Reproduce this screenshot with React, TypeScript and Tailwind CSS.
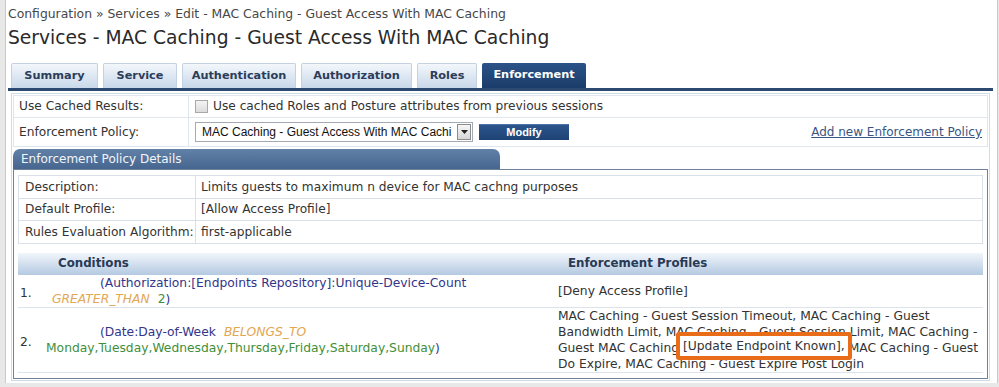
import React from "react";

const tabs = [
  { label: "Summary", w: "w-[87px]", active: false },
  { label: "Service", w: "w-[74px]", active: false },
  { label: "Authentication", w: "w-[114px]", active: false },
  { label: "Authorization", w: "w-[111px]", active: false },
  { label: "Roles", w: "w-[60px]", active: false },
  { label: "Enforcement", w: "w-[104px]", active: true },
];

export default function App() {
  return (
    <div className="w-[999px] h-[387px] overflow-hidden bg-[#e8e8e8] font-['DejaVu_Sans',Verdana,sans-serif] text-[12.2px] text-[#333]">
      <div className="ml-[5px] mr-[1px] h-[383px] bg-white border-l border-r border-[#c9c9c9] pl-[2px] pr-[4px]">
        <div className="pt-[6px] leading-[16px] text-[12.4px] text-[#474747]">
          Configuration » Services » Edit - MAC Caching - Guest Access With MAC Caching
        </div>
        <div className="mt-[5px] text-[18.7px] leading-[22px] text-[#2a2a2a]">
          Services - MAC Caching - Guest Access With MAC Caching
        </div>

        <div className="mt-[14px] ml-[3px] flex gap-[5px]">
          {tabs.map((t) =>
            t.active ? (
              <div
                key={t.label}
                className={`${t.w} h-[25px] flex items-center justify-center rounded-t-[2px] bg-gradient-to-b from-[#2b5389] to-[#1b3c6a] text-[11.3px] font-bold text-white`}
              >
                {t.label}
              </div>
            ) : (
              <div
                key={t.label}
                className={`${t.w} h-[25px] flex items-center justify-center rounded-t-[2px] border border-b-0 border-[#c3d1e1] bg-gradient-to-b from-[#f3f7fb] to-[#c8d8ea] text-[11.3px] font-bold text-[#2b3d59]`}
              >
                {t.label}
              </div>
            )
          )}
        </div>
        <div className="h-[3px] bg-[#2c4a71]" />

        <div className="mt-[2px] mx-[3px] border border-[#d3dbe4] p-[1px]">
          <table className="w-full border-collapse">
            <tbody>
              <tr className="h-[22px]">
                <td className="w-[175px] border border-[#e0e6ed] pl-[5px] text-[#333]">Use Cached Results:</td>
                <td className="border border-[#e0e6ed] pl-[6px]">
                  <div className="flex items-center">
                    <span className="inline-block w-[13px] h-[13px] border border-[#a9a9a9] bg-gradient-to-b from-[#f4f4f4] to-[#dcdcdc]" />
                    <span className="ml-[5px]">Use cached Roles and Posture attributes from previous sessions</span>
                  </div>
                </td>
              </tr>
              <tr className="h-[29px]">
                <td className="border border-[#e0e6ed] pl-[5px]">Enforcement Policy:</td>
                <td className="border border-[#e0e6ed] pl-[6px] pr-[5px]">
                  <div className="flex items-center">
                    <div className="w-[278px] h-[20px] border border-[#a3aab3] bg-white flex items-center">
                      <div className="flex-1 overflow-hidden whitespace-nowrap pl-[6px] font-['Liberation_Sans',Arial,sans-serif] text-[12px] text-[#111]">
                        MAC Caching - Guest Access With MAC Cachi
                      </div>
                      <div className="w-[14px] h-[16px] mr-[1px] border border-[#8c8c8c] bg-gradient-to-b from-[#f7f7f7] to-[#d6d6d6] flex items-center justify-center">
                        <svg width="7" height="4" viewBox="0 0 7 4">
                          <path d="M0 0h7L3.5 4z" fill="#222" />
                        </svg>
                      </div>
                    </div>
                    <div className="ml-[6px] w-[90px] h-[16px] border-t border-[#4d72a6] bg-gradient-to-b from-[#2c558d] to-[#1e4274] flex items-center justify-center font-['Liberation_Sans',Arial,sans-serif] text-[11px] font-bold text-white">
                      Modify
                    </div>
                    <a className="ml-auto text-[12px] text-[#3a5583] underline">Add new Enforcement Policy</a>
                  </div>
                </td>
              </tr>
            </tbody>
          </table>

          <div className="mt-[2px] w-[487px] h-[20px] rounded-t-[7px] bg-gradient-to-b from-[#6281a8] to-[#46668f] pl-[8px] leading-[20px] text-[12px] text-[#f2f5fa]">
            Enforcement Policy Details
          </div>
          <div className="border border-[#6e8299] px-[4px] pt-[5px] pb-[5px]">
            <table className="w-full border-collapse">
              <tbody>
                <tr className="h-[23px]">
                  <td className="w-[177px] border border-[#d9e0e8] pl-[6px]">Description:</td>
                  <td className="border border-[#d9e0e8] pl-[5px]">Limits guests to maximum n device for MAC cachng purposes</td>
                </tr>
                <tr className="h-[22px]">
                  <td className="border border-[#d9e0e8] pl-[6px]">Default Profile:</td>
                  <td className="border border-[#d9e0e8] pl-[5px]">[Allow Access Profile]</td>
                </tr>
                <tr className="h-[23px]">
                  <td className="border border-[#d9e0e8] pl-[6px]">Rules Evaluation Algorithm:</td>
                  <td className="border border-[#d9e0e8] pl-[5px]">first-applicable</td>
                </tr>
              </tbody>
            </table>

            <table className="mt-[9px] w-full border-collapse">
              <thead>
                <tr className="h-[22px] bg-gradient-to-b from-[#f2f6fb] to-[#b4c9e1]">
                  <th colSpan={2} className="pl-[40px] text-left text-[11.8px] font-bold text-[#283a56]">Conditions</th>
                  <th className="pl-[15px] text-left text-[11.8px] font-bold text-[#283a56]">Enforcement Profiles</th>
                </tr>
              </thead>
              <tbody className="leading-[16px] text-[12.3px]">
                <tr className="h-[31px] border-b border-[#dde3ea]">
                  <td className="w-[28px] pl-[2px] pt-[4px] align-middle">1.</td>
                  <td className="w-[507px] align-middle">
                    <div className="pl-[54px] text-[#33358a]">(Authorization:[Endpoints Repository]:Unique-Device-Count</div>
                    <div className="pl-[6px]">
                      <span className="italic text-[#e3a652]">GREATER_THAN</span>
                      <span className="ml-[8px] text-[#3f8f3a]">2</span>
                      <span className="text-[#33358a]">)</span>
                    </div>
                  </td>
                  <td className="pl-[5px] align-middle">[Deny Access Profile]</td>
                </tr>
                <tr className="h-[63px] border-b border-[#dde3ea]">
                  <td className="pl-[2px] pt-[4px] align-middle">2.</td>
                  <td className="align-middle">
                    <div className="pl-[54px]">
                      <span className="text-[#33358a]">(Date:Day-of-Week</span>
                      <span className="ml-[8px] italic text-[#e3a652]">BELONGS_TO</span>
                    </div>
                    <div>
                      <span className="text-[#3f8f3a]">Monday,Tuesday,Wednesday,Thursday,Friday,Saturday,Sunday</span>
                      <span className="text-[#33358a]">)</span>
                    </div>
                  </td>
                  <td className="pl-[5px] align-middle leading-[16px] whitespace-nowrap">
                    <div>MAC Caching - Guest Session Timeout, MAC Caching - Guest</div>
                    <div>Bandwidth Limit, MAC Caching - Guest Session Limit, MAC Caching -</div>
                    <div>
                      Guest MAC Caching{" "}
                      <span className="relative -top-[2px] z-10 -mx-[7px] px-[3px] py-[3px] border-4 border-[#e96c18] rounded-[3px] bg-white">
                        [Update Endpoint Known],
                      </span>{" "}
                      MAC Caching - Guest
                    </div>
                    <div>Do Expire, MAC Caching - Guest Expire Post Login</div>
                  </td>
                </tr>
              </tbody>
            </table>
          </div>
        </div>
      </div>
    </div>
  );
}
